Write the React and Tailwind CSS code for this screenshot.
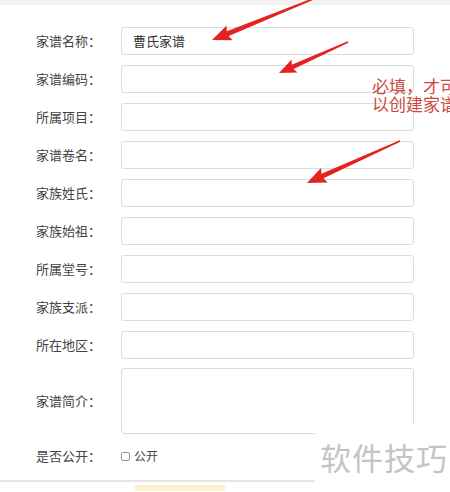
import React from "react";

const fields = [
  { label: "家谱名称：", value: "曹氏家谱" },
  { label: "家谱编码：" },
  { label: "所属项目：" },
  { label: "家谱卷名：" },
  { label: "家族姓氏：" },
  { label: "家族始祖：" },
  { label: "所属堂号：" },
  { label: "家族支派：" },
  { label: "所在地区：" },
];

const font = { fontFamily: '"Noto Sans CJK SC", "Liberation Sans", sans-serif' };

// tapered arrow polygon from tail to tip
const arrowPoints = (tx, ty, hx, hy, tailW = 1.5, neckW = 5, headLen = 17, headW = 16) => {
  const dx = hx - tx;
  const dy = hy - ty;
  const len = Math.hypot(dx, dy);
  const ux = dx / len;
  const uy = dy / len;
  const px = -uy;
  const py = ux;
  const nx = hx - ux * headLen;
  const ny = hy - uy * headLen;
  const pts = [
    [tx + px * tailW / 2, ty + py * tailW / 2],
    [nx + px * neckW / 2, ny + py * neckW / 2],
    [nx + px * headW / 2 - ux * 2, ny + py * headW / 2 - uy * 2],
    [hx, hy],
    [nx - px * headW / 2 - ux * 2, ny - py * headW / 2 - uy * 2],
    [nx - px * neckW / 2, ny - py * neckW / 2],
    [tx - px * tailW / 2, ty - py * tailW / 2],
  ];
  return pts.map((p) => p.map((v) => v.toFixed(1)).join(",")).join(" ");
};

const App = () => {
  return (
    <div className="relative w-[450px] h-[492px] overflow-hidden bg-white" style={font}>
      <div className="h-[5px] bg-[#f2f2f2]" />
      <div className="flex flex-col gap-[10px] pt-[22px]">
        {fields.map((f) => (
          <div key={f.label} className="flex items-center h-[28px]">
            <div className="w-[121px] pl-[36px] text-[13px] text-[#444]">{f.label}</div>
            <div className="w-[293px] h-[28px] border border-[#dcdcdc] rounded-[3px] flex items-center px-[11px] text-[13px] text-[#333]">
              {f.value}
            </div>
          </div>
        ))}
        <div className="flex items-center h-[66px] -mt-[1px]">
          <div className="w-[121px] pl-[36px] text-[13px] text-[#444]">家谱简介：</div>
          <div className="w-[293px] h-[66px] border border-[#dcdcdc] rounded-[3px]" />
        </div>
        <div className="flex items-center h-[28px] -mt-[2px]">
          <div className="w-[121px] pl-[36px] text-[13px] text-[#444]">是否公开：</div>
          <div className="flex items-center gap-[4px] text-[12px] text-[#444]">
            <span className="w-[9px] h-[9px] border border-[#999] rounded-[2px]" />
            公开
          </div>
        </div>
      </div>
      <div className="mt-[10px] w-[315px] h-[2px] bg-[#e6e6e6]" />
      <div className="ml-[135px] mt-[3px] w-[90px] h-[6px] bg-[#fbf3cf]" />

      <div className="absolute left-[372px] top-[77px] text-[17px] leading-[18px] text-[#cc4a40] whitespace-nowrap">
        <div>必填，才可</div>
        <div>以创建家谱</div>
      </div>

      <svg className="absolute left-0 top-0" width="450" height="492">
        <polygon points={arrowPoints(318, -3, 212, 40)} fill="#e3231d" />
        <polygon points={arrowPoints(348, 42, 279, 73, 1.5, 4.5, 15, 14)} fill="#e3231d" />
        <polygon points={arrowPoints(400, 141, 307, 183)} fill="#e3231d" />
      </svg>

      <div className="absolute left-[315px] top-[425px] w-[135px] h-[67px] bg-white flex items-start pt-[15px] pl-[5px]">
        <span className="text-[31px] leading-[34px] text-[#c4c4c4] tracking-[1px]">软件技巧</span>
      </div>
    </div>
  );
};

export default App;
